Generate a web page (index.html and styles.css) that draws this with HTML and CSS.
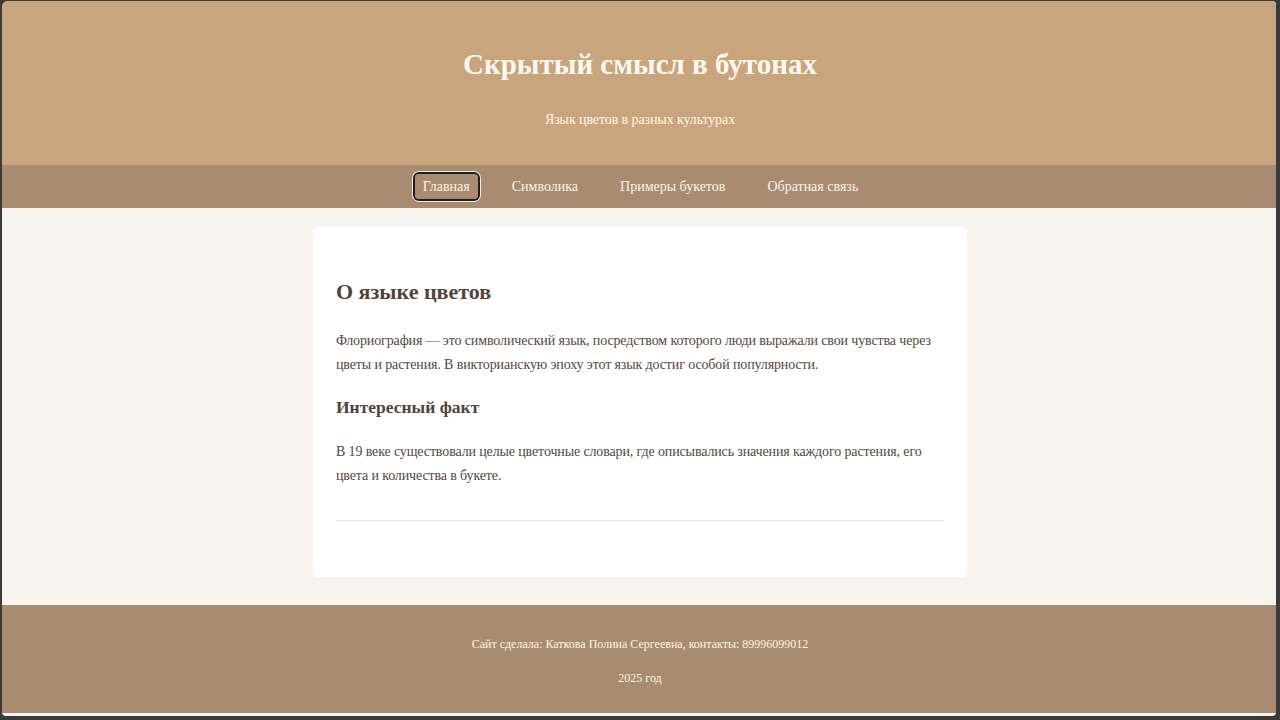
FILE: index.html
```html
<!DOCTYPE html>
<html lang="ru">
<head>
<meta charset="utf-8">
<title>Скрытый смысл в бутонах</title>
<link rel="stylesheet" href="styles.css">
</head>
<body>
<div class="frame">
  <header class="site-header">
    <h1 class="site-title">Скрытый смысл в бутонах</h1>
    <p class="site-subtitle">Язык цветов в разных культурах</p>
  </header>
  <nav class="site-nav">
    <a class="nav-link nav-link--active" href="#">Главная</a>
    <a class="nav-link" href="#">Символика</a>
    <a class="nav-link" href="#">Примеры букетов</a>
    <a class="nav-link" href="#">Обратная связь</a>
  </nav>
  <main class="site-main">
    <article class="card">
      <h2 class="card-title">О языке цветов</h2>
      <p class="card-text">Флориография — это символический язык, посредством которого люди выражали свои чувства через цветы и растения. В викторианскую эпоху этот язык достиг особой популярности.</p>
      <h3 class="card-subtitle">Интересный факт</h3>
      <p class="card-text">В 19 веке существовали целые цветочные словари, где описывались значения каждого растения, его цвета и количества в букете.</p>
      <hr class="card-rule">
    </article>
  </main>
  <footer class="site-footer">
    <p class="footer-line">Сайт сделала: Каткова Полина Сергеевна, контакты: 89996099012</p>
    <p class="footer-line">2025 год</p>
  </footer>
</div>
</body>
</html>
```
FILE: styles.css
```css
* { box-sizing: border-box; }

html, body {
  margin: 0;
  height: 100%;
}

body {
  background: #3a3a3a;
  padding: 1px 4px 0 2px;
  font-family: "Liberation Serif", "Times New Roman", serif;
  overflow: hidden;
}

.frame {
  height: 715px;
  background: #f7f3ee;
  border-radius: 6px 4px 4px 4px;
  overflow: hidden;
}

.site-header {
  background: #c8a57c;
  height: 164px;
  padding-top: 45px;
  padding-left: 2px;
  text-align: center;
  color: #fdf8f1;
}

.site-title {
  margin: 0;
  font-size: 29px;
  line-height: 36px;
  font-weight: bold;
}

.site-subtitle {
  margin: 28px 0 0;
  font-size: 14px;
  line-height: 20px;
  letter-spacing: -0.1px;
}

.site-nav {
  background: #a98b71;
  height: 43px;
  padding-left: 3px;
  display: flex;
  justify-content: center;
  align-items: center;
  gap: 26px;
}

.nav-link {
  color: #fbf3ea;
  text-decoration: none;
  font-size: 14px;
  line-height: 19px;
  padding: 3px 8px;
  border-radius: 4px;
}

.nav-link--active {
  box-shadow: 0 0 0 2px #1f1f1f, 0 0 0 3px #f1ebe4;
}

.site-main {
  padding: 19px 0 28px 2px;
}

.card {
  width: 654px;
  height: 350px;
  margin: 0 auto;
  background: #ffffff;
  border-radius: 5px;
  padding: 52px 23px 0;
  color: #574640;
}

.card-title {
  margin: 0;
  font-size: 22px;
  line-height: 26px;
  font-weight: bold;
  color: #52423a;
}

.card-text {
  margin: 24px 0 0;
  font-size: 14px;
  line-height: 24px;
  letter-spacing: -0.13px;
}

.card-subtitle {
  margin: 19px 0 0;
  font-size: 17.5px;
  line-height: 22px;
  font-weight: bold;
  color: #52423a;
}

.card-subtitle + .card-text { margin-top: 22px; }

.card-rule {
  margin: 32px 0 0;
  border: 0;
  border-top: 1px solid #ece6df;
  height: 0;
}

.site-footer {
  background: #a98b71;
  height: 108px;
  padding-top: 31px;
  padding-left: 2px;
  text-align: center;
  color: #fbf3ea;
}

.footer-line {
  margin: 0 0 18px;
  font-size: 12px;
  line-height: 16px;
}
```
